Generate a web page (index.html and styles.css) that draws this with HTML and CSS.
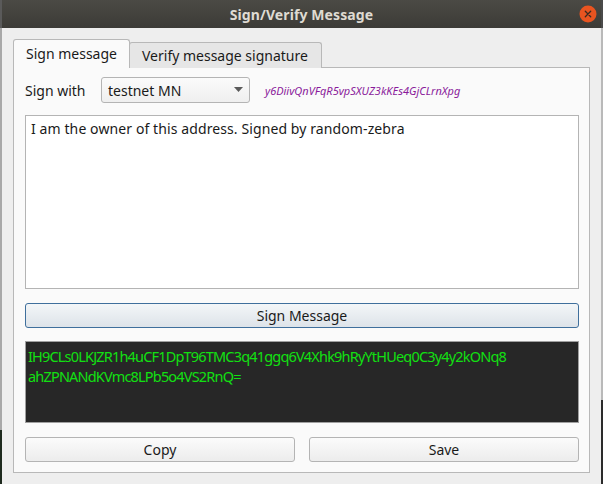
FILE: index.html
```html
<!DOCTYPE html>
<html>
<head>
<meta charset="utf-8">
<link rel="stylesheet" href="styles.css">
</head>
<body>
<div class="desktop">
  <div class="edge-left"></div>
  <div class="window">
    <div class="titlebar">
      <span class="title">Sign/Verify Message</span>
      <span class="close">
        <svg width="18" height="18" viewBox="0 0 18 18">
          <circle cx="9" cy="9" r="8.5" fill="#e95420"/>
          <path d="M6.3 6.3 L11.7 11.7 M11.7 6.3 L6.3 11.7" stroke="#3a2a20" stroke-width="1.3" stroke-linecap="round"/>
        </svg>
      </span>
    </div>
    <div class="body">
      <div class="tabs">
        <div class="tab active">Sign message</div>
        <div class="tab">Verify message signature</div>
      </div>
      <div class="panel">
        <div class="row">
          <span class="label">Sign with</span>
          <div class="combo">
            <span>testnet MN</span>
            <svg class="arrow" width="9" height="5" viewBox="0 0 9 5"><path d="M0 0 L9 0 L4.5 5 Z" fill="#5a5a5a"/></svg>
          </div>
          <span class="address">y6DiivQnVFqR5vpSXUZ3kKEs4GjCLrnXpg</span>
        </div>
        <div class="message">I am the owner of this address. Signed by random-zebra</div>
        <button class="btn primary">Sign Message</button>
        <div class="signature">IH9CLs0LKJZR1h4uCF1DpT96TMC3q41ggq6V4Xhk9hRyYtHUeq0C3y4y2kONq8<br>ahZPNANdKVmc8LPb5o4VS2RnQ=</div>
        <div class="actions">
          <button class="btn">Copy</button>
          <button class="btn">Save</button>
        </div>
      </div>
    </div>
  </div>
  <div class="edge-right"></div>
</div>
</body>
</html>
```

FILE: styles.css
```css
html, body {
  margin: 0;
  padding: 0;
}
body {
  width: 603px;
  height: 484px;
  overflow: hidden;
  background: #8a8a8a;
  font-family: "Noto Sans", "DejaVu Sans", sans-serif;
}
.desktop {
  display: flex;
  height: 484px;
}
.edge-left {
  width: 2px;
  background: linear-gradient(to bottom, #5a5a5a 0, #5a5a5a 28px, #a8a8a8 28px, #a8a8a8 430px, #1e2a1e 430px);
}
.edge-right {
  width: 2px;
  background: linear-gradient(to bottom, #4a4a4a 0, #4a4a4a 28px, #b9b9b9 28px, #b9b9b9 400px, #2b2b2b 400px);
}
.window {
  width: 599px;
  height: 484px;
  background: #eeeeee;
  display: flex;
  flex-direction: column;
}
.titlebar {
  height: 28px;
  flex: none;
  background: linear-gradient(to bottom, #4b4a45, #3c3b37);
  display: flex;
  align-items: center;
  justify-content: center;
  position: relative;
}
.title {
  color: #dfdbd2;
  font-weight: bold;
  font-size: 14px;
  letter-spacing: 0.1px;
}
.close {
  position: absolute;
  right: 4px;
  top: 5px;
  width: 18px;
  height: 18px;
}
.body {
  padding: 11px 11px 13px 11px;
  display: flex;
  flex-direction: column;
  flex: 1;
}
.tabs {
  display: flex;
  align-items: flex-end;
  height: 29px;
  margin-bottom: -1px;
  position: relative;
  z-index: 1;
}
.tab {
  font-size: 14px;
  color: #1a1a1a;
  border: 1px solid #b8b8b8;
  border-bottom: none;
  border-radius: 3px 3px 0 0;
  background: #e6e6e6;
  height: 26px;
  box-sizing: border-box;
  padding: 0 12px;
  display: flex;
  align-items: center;
}
.tab.active {
  background: #fafafa;
  height: 29px;
  padding: 0 12px 2px 12px;
}
.tab + .tab {
  margin-left: -1px;
  padding: 0 13px 0 12px;
}
.panel {
  flex: 1;
  border: 1px solid #b8b8b8;
  background: #fafafa;
  padding: 9px 10px 10px 11px;
  display: flex;
  flex-direction: column;
}
.row {
  display: flex;
  align-items: center;
  height: 26px;
}
.label {
  font-size: 14px;
  color: #1a1a1a;
  width: 76px;
}
.combo {
  width: 149px;
  height: 26px;
  box-sizing: border-box;
  border: 1px solid #b4b4b4;
  border-radius: 3px;
  background: linear-gradient(to bottom, #fbfbfb, #efefef);
  display: flex;
  align-items: center;
  justify-content: space-between;
  padding: 0 6px 0 6px;
  font-size: 14px;
  color: #1a1a1a;
}
.arrow {
  margin-bottom: 1px;
}
.address {
  margin-left: 15px;
  font-style: italic;
  font-size: 11px;
  color: #8a1a9a;
}
.message {
  margin-top: 12px;
  height: 174px;
  box-sizing: border-box;
  background: #ffffff;
  border: 1px solid #b4b4b4;
  padding: 3px 5px;
  font-size: 14px;
  letter-spacing: 0.1px;
  color: #1a1a1a;
}
.btn {
  font-family: inherit;
  font-size: 14px;
  color: #1a1a1a;
  height: 25px;
  box-sizing: border-box;
  border: 1px solid #b4b4b4;
  border-radius: 3px;
  background: linear-gradient(to bottom, #fbfbfb, #ececec);
  padding: 0;
}
.btn.primary {
  margin-top: 14px;
  border-color: #3f6f9c;
  background: linear-gradient(to bottom, #f3f6f8, #dde3e9);
}
.signature {
  margin-top: 13px;
  height: 82px;
  box-sizing: border-box;
  background: #272727;
  border: 1px solid #a0a0a0;
  padding: 4px 2px;
  color: #12e012;
  font-size: 14.5px;
  letter-spacing: -0.82px;
  line-height: 20px;
  white-space: nowrap;
}
.actions {
  margin-top: 14px;
  display: grid;
  grid-template-columns: 1fr 1fr;
  gap: 14px;
}
```
